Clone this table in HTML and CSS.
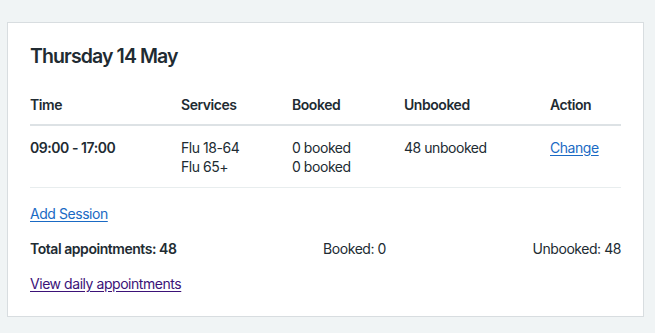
FILE: index.html
```html
<!DOCTYPE html>
<html lang="en">
<head>
<meta charset="utf-8">
<title>Thursday 14 May</title>
<link rel="stylesheet" href="styles.css">
</head>
<body>
<main class="page">
  <section class="card">
    <h2 class="card-title">Thursday 14 May</h2>
    <table class="sessions">
      <colgroup>
        <col class="col-time">
        <col class="col-services">
        <col class="col-booked">
        <col class="col-unbooked">
        <col class="col-action">
      </colgroup>
      <thead>
        <tr>
          <th>Time</th>
          <th>Services</th>
          <th>Booked</th>
          <th>Unbooked</th>
          <th>Action</th>
        </tr>
      </thead>
      <tbody>
        <tr>
          <td class="strong">09:00 - 17:00</td>
          <td>Flu 18-64<br>Flu 65+</td>
          <td>0 booked<br>0 booked</td>
          <td>48 unbooked</td>
          <td><a href="#" class="link">Change</a></td>
        </tr>
      </tbody>
    </table>
    <p class="add"><a href="#" class="link">Add Session</a></p>
    <div class="totals">
      <span class="strong">Total appointments: 48</span>
      <span>Booked: 0</span>
      <span>Unbooked: 48</span>
    </div>
    <p class="daily"><a href="#" class="link visited">View daily appointments</a></p>
  </section>
</main>
</body>
</html>
```

FILE: styles.css
```css
html {
  background: #ffffff;
}
body {
  margin: 0;
  font-family: Inter, "Liberation Sans", Arial, sans-serif;
  color: #212b32;
  font-size: 14px;
  line-height: 19px;
  letter-spacing: -0.45px;
}
.page {
  width: 655px;
  height: 333px;
  box-sizing: border-box;
  background: #f0f4f5;
  padding: 22px 0 0 7px;
}
.card {
  width: 637px;
  height: 295px;
  box-sizing: border-box;
  background: #ffffff;
  border: 1px solid #d8dde0;
  padding: 19px 22px 0 22px;
}
.card-title {
  margin: 0 0 13px;
  font-size: 19.5px;
  line-height: 28px;
  font-weight: 600;
  letter-spacing: -0.9px;
}
.sessions {
  width: 100%;
  border-collapse: collapse;
  table-layout: fixed;
}
.col-time { width: 151px; }
.col-services { width: 111px; }
.col-booked { width: 112px; }
.col-unbooked { width: 146px; }
.sessions th,
.sessions td {
  text-align: left;
  vertical-align: top;
  padding: 12px 0 11px;
  border-bottom: 1px solid #d8dde0;
}
.sessions th {
  font-weight: 600;
  border-bottom-width: 2px;
  border-bottom-color: #dde2e5;
  padding-bottom: 10px;
}
.sessions td {
  border-bottom-color: #e8edee;
  padding-bottom: 11px;
}
.strong {
  font-weight: 600;
}
.link {
  color: #1a6ac4;
  text-decoration: underline;
  text-underline-offset: 2px;
}
.link.visited {
  color: #3b1278;
}
.add {
  margin: 16px 0 0;
}
.totals {
  display: flex;
  justify-content: space-between;
  margin-top: 16px;
}
.daily {
  margin: 16px 0 0;
}
```
